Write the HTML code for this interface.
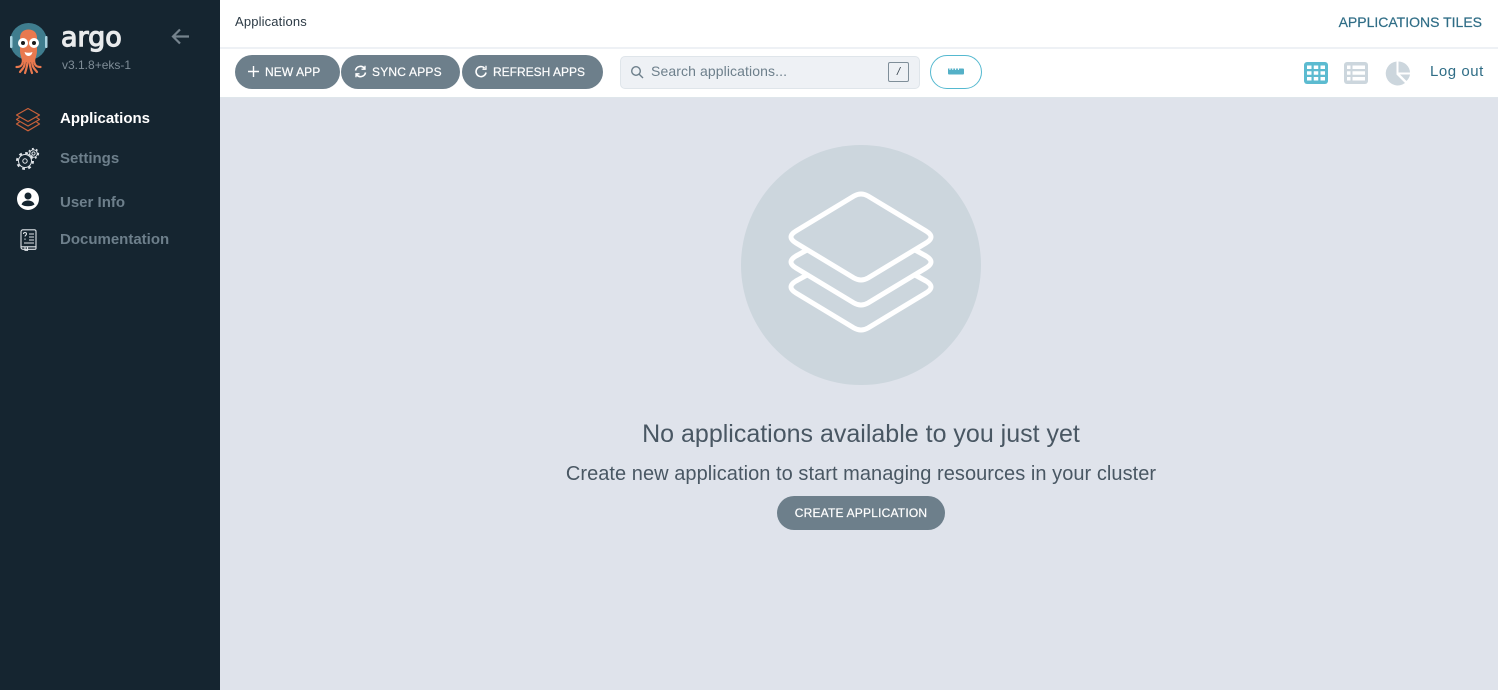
<!DOCTYPE html>
<html><head><meta charset="utf-8"><style>
html,body{margin:0;padding:0;width:1498px;height:690px;overflow:hidden;background:#dfe3eb;font-family:"Liberation Sans",sans-serif}
.a{position:absolute;white-space:nowrap}
#side{left:0;top:0;width:220px;height:690px;background:#152530}
.nav{left:60px;font-size:15px;font-weight:bold;color:#6d7f8b;line-height:20px}
.btn{height:34px;top:55px;border-radius:17px;background:#6d7f8b;color:#fff;font-size:12px;line-height:34px;box-sizing:border-box;-webkit-text-stroke:.2px #fff}
.btn svg{position:absolute}
.btn span{position:absolute;top:0}
</style></head><body>
<div class="a" id="side"></div>

<svg class="a" style="left:0;top:0" width="60" height="80" viewBox="0 0 60 80">
<circle cx="28.500" cy="41.500" r="18.500" fill="#3f7d8e"/>
<rect x="10" y="36" width="2.500" height="12" rx="1" fill="#a9d3e0"/>
<rect x="45" y="36" width="2.500" height="12" rx="1" fill="#a9d3e0"/>
<path d="M20 38C20 32 24 29.500 28.500 29.500S37 32 37 38V50C37 56 35 58 35 62H22C22 58 20 56 20 50z" fill="#e9794f"/>
<g fill="none" stroke="#e9794f" stroke-width="2.200" stroke-linecap="round">
<path d="M23 59C23 66 20 67 16.500 67"/><path d="M25 60C25 68 22 69 20 72"/><path d="M27.500 60C27.500 66 26 70 25 73"/><path d="M29.500 60C29.500 66 31 70 32 73"/><path d="M32 60C32 68 35 69 37 72"/><path d="M34 59C34 66 37 67 40.500 67"/>
</g>
<circle cx="23" cy="43" r="5" fill="#fff"/><circle cx="34" cy="43" r="5" fill="#fff"/>
<circle cx="23" cy="43" r="2" fill="#1a1a1a"/><circle cx="34" cy="43" r="2" fill="#1a1a1a"/>
<path d="M24.500 52q4 1.500 8 0q-1 4-4 4t-4-4z" fill="#fff"/>
</svg>
<div class="a" style="left:61px;top:21px;font-family:'DejaVu Sans',sans-serif;font-size:27px;line-height:33px;color:#e9ebec;-webkit-text-stroke:1.200px #e9ebec">argo</div>
<div class="a" style="left:62px;top:58px;font-size:12px;line-height:14px;color:#7f8d97;">v3.1.8+eks-1</div>
<svg class="a" style="left:170px;top:26px" width="21" height="21" viewBox="0 0 21 21" fill="none" stroke="#75838d" stroke-width="2.200"><path d="M19 10.500H3M10 3.500l-7 7 7 7"/></svg>

<svg class="a" style="left:15px;top:107px" width="26" height="26" viewBox="0 0 26 26" fill="none" stroke="#c9613a" stroke-width="1.200" stroke-linejoin="round"><path d="M13 1.500 24.500 8 13 14.500 1.500 8z"/><path d="M4.500 10.500 1.500 12.500 13 19 24.500 12.500 21.500 10.500"/><path d="M4.500 15 1.500 17 13 23.800 24.500 17 21.500 15"/></svg>
<div class="a nav" style="top:109px;color:#fff">Applications</div>

<svg class="a" style="left:16px;top:147px" width="24" height="24" viewBox="0 0 24 24" fill="none" stroke="#dfe4e8" stroke-width="1">
<circle cx="9" cy="14" r="2.200"/><circle cx="9" cy="14" r="6.500"/><circle cx="9" cy="14" r="8" stroke-width="2" stroke-dasharray="2.800 3.480"/>
<circle cx="17.500" cy="6.500" r="1.600"/><circle cx="17.500" cy="6.500" r="3.800"/><circle cx="17.500" cy="6.500" r="4.800" stroke-width="1.600" stroke-dasharray="1.800 2.390"/></svg>
<div class="a nav" style="top:149px">Settings</div>

<svg class="a" style="left:17px;top:188px" width="22" height="22" viewBox="0 0 22 22"><circle cx="11" cy="11" r="11" fill="#fff"/><circle cx="11" cy="8" r="3.500" fill="#152530"/><path d="M4.500 16.500c1-3 4-4 6.500-4s5.500 1 6.500 4c-1.500 1.200-4 1.800-6.500 1.800s-5-.6-6.500-1.800z" fill="#152530"/></svg>
<div class="a nav" style="top:193px">User Info</div>

<svg class="a" style="left:20px;top:229px" width="17" height="22" viewBox="0 0 17 22" fill="none" stroke="#dfe4e8" stroke-width="1.100"><path d="M3 .8h11.500a1.500 1.500 0 0 1 1.500 1.500v17a1 1 0 0 1-1 1H3a2 2 0 0 1-2-2V2.800a2 2 0 0 1 2-2z"/><path d="M1 17.800h15M5 17.800v3.500h2.500v-3.500M9 5h5M9 8h5M9 11h5M4 14h10M3.500 5c0-2 3-2 3 0 0 1.200-1.500 1.200-1.500 2.500M5 9.500v1.200"/></svg>
<div class="a nav" style="top:230px">Documentation</div>

<div class="a" style="left:220px;top:0;width:1278px;height:47px;background:#fff"></div>
<div class="a" style="left:220px;top:47px;width:1278px;height:2px;background:#eef1f5"></div>
<div class="a" style="left:220px;top:49px;width:1278px;height:48px;background:#fff"></div>
<div class="a" style="left:220px;top:97px;width:1278px;height:1px;background:#dfe6eb"></div>

<div class="a" style="left:235px;top:14px;font-size:13px;line-height:15px;color:#2c3a45;letter-spacing:.15px">Applications</div>
<div class="a" style="right:16px;top:14px;font-size:14px;line-height:16px;color:#2f6d86;-webkit-text-stroke:.2px #2f6d86">APPLICATIONS TILES</div>

<div class="a btn" style="left:235px;width:105px"><svg style="left:13px;top:11px" width="11" height="11" viewBox="0 0 11 11" stroke="#fff" stroke-width="1.400"><path d="M5.500 0v11M0 5.500h11"/></svg><span style="left:30px;letter-spacing:.1px">NEW APP</span></div>
<div class="a btn" style="left:341px;width:119px"><svg style="left:13px;top:10px" width="13" height="13" viewBox="0 0 13 13" fill="none" stroke="#fff" stroke-width="1.600"><path d="M1.500 5.500A5 5 0 0 1 10.500 3.500M11.500 7.500A5 5 0 0 1 2.500 9.500"/><path d="M11 .8v3.400H7.500M2 12.200V8.800h3.500" stroke-width="1.300"/></svg><span style="left:31px;letter-spacing:.2px">SYNC APPS</span></div>
<div class="a btn" style="left:462px;width:141px"><svg style="left:13px;top:10px" width="13" height="13" viewBox="0 0 13 13" fill="none" stroke="#fff" stroke-width="1.600"><path d="M11 7.500A5 5 0 1 1 9.500 3"/><path d="M11 .8v3.400H7.500" stroke-width="1.300"/></svg><span style="left:31px">REFRESH APPS</span></div>

<div class="a" style="left:620px;top:56px;width:300px;height:33px;box-sizing:border-box;background:#eef1f5;border:1px solid #dfe5ea;border-radius:5px"></div>
<svg class="a" style="left:630px;top:65px" width="14" height="14" viewBox="0 0 14 14" fill="none" stroke="#6d7f8b" stroke-width="1.400"><circle cx="6" cy="6" r="4.300"/><path d="M9.200 9.200 13 13"/></svg>
<div class="a" style="left:651px;top:63px;font-size:14px;line-height:16px;color:#6d7f8b;letter-spacing:.1px">Search applications...</div>
<div class="a" style="left:888px;top:62px;width:21px;height:20px;box-sizing:border-box;border:1px solid #7f8e99;border-radius:2px;color:#333f4a;font-size:11px;line-height:18px;text-align:center;font-style:italic">/</div>

<div class="a" style="left:930px;top:55px;width:52px;height:34px;box-sizing:border-box;border:1px solid #55b9d0;border-radius:17px;background:#fff"></div>
<svg class="a" style="left:947px;top:67px" width="18" height="9" viewBox="0 0 18 9"><path d="M1 1.500h1.500v1.500h1V1.500h1.800v1.500h1V1.500h1.800v1.500h1V1.500h1.800v1.500h1V1.500H16a1 1 0 0 1 1 1v4a1 1 0 0 1-1 1H2a1 1 0 0 1-1-1z" fill="#54b0c7"/></svg>

<svg class="a" style="left:1304px;top:62px" width="24" height="22" viewBox="0 0 24 22"><rect width="24" height="22" rx="3" fill="#5cbbd0"/><g fill="#fff"><rect x="3" y="3.500" width="4.500" height="3.500"/><rect x="9.750" y="3.500" width="4.500" height="3.500"/><rect x="16.500" y="3.500" width="4.500" height="3.500"/><rect x="3" y="9.250" width="4.500" height="3.500"/><rect x="9.750" y="9.250" width="4.500" height="3.500"/><rect x="16.500" y="9.250" width="4.500" height="3.500"/><rect x="3" y="15" width="4.500" height="3.500"/><rect x="9.750" y="15" width="4.500" height="3.500"/><rect x="16.500" y="15" width="4.500" height="3.500"/></g></svg>
<svg class="a" style="left:1344px;top:62px" width="24" height="22" viewBox="0 0 24 22"><rect width="24" height="22" rx="3" fill="#ccd6dd"/><g fill="#fff"><rect x="3" y="3.500" width="3.500" height="3.500"/><rect x="8.500" y="3.500" width="12.500" height="3.500"/><rect x="3" y="9.250" width="3.500" height="3.500"/><rect x="8.500" y="9.250" width="12.500" height="3.500"/><rect x="3" y="15" width="3.500" height="3.500"/><rect x="8.500" y="15" width="12.500" height="3.500"/></g></svg>
<svg class="a" style="left:1385px;top:60px" width="26" height="26" viewBox="0 0 26 26" fill="#ccd6dd"><path d="M11.500 1.500A12 12 0 1 0 20 23L11.500 14.500z"/><path d="M13.500 1.500A11.500 11.500 0 0 1 25 12.500H13.500z"/><path d="M15 14.500H25A12 12 0 0 1 21.500 21z"/></svg>
<div class="a" style="left:1430px;top:63px;font-size:15px;line-height:18px;color:#2f6d86;letter-spacing:.55px">Log out</div>

<div class="a" style="left:741px;top:145px;width:240px;height:240px;border-radius:50%;background:#ccd6dd"></div>
<svg class="a" style="left:781px;top:185px" width="160" height="155" viewBox="0 0 160 155" fill="none" stroke="#fff" stroke-width="5" stroke-linejoin="round" stroke-linecap="round">
<path d="M73 11Q80 7 87 11L145 46Q155 52 145 58L87 93Q80 97 73 93L15 58Q5 52 15 46Z"/>
<path d="M26 65 15 71Q5 77 15 83L73 118Q80 122 87 118L145 83Q155 77 145 71L134 65"/>
<path d="M26 90 15 96Q5 102 15 108L73 143Q80 147 87 143L145 108Q155 102 145 96L134 90"/>
</svg>
<div class="a" style="left:0;top:419px;width:1722px;text-align:center;font-size:25px;line-height:30px;color:#495763">No applications available to you just yet</div>
<div class="a" style="left:0;top:462px;width:1722px;text-align:center;font-size:20px;line-height:24px;color:#495763;letter-spacing:.05px">Create new application to start managing resources in your cluster</div>
<div class="a btn" style="left:777px;top:496px;width:168px;text-align:center;letter-spacing:.2px">CREATE APPLICATION</div>
</body></html>
